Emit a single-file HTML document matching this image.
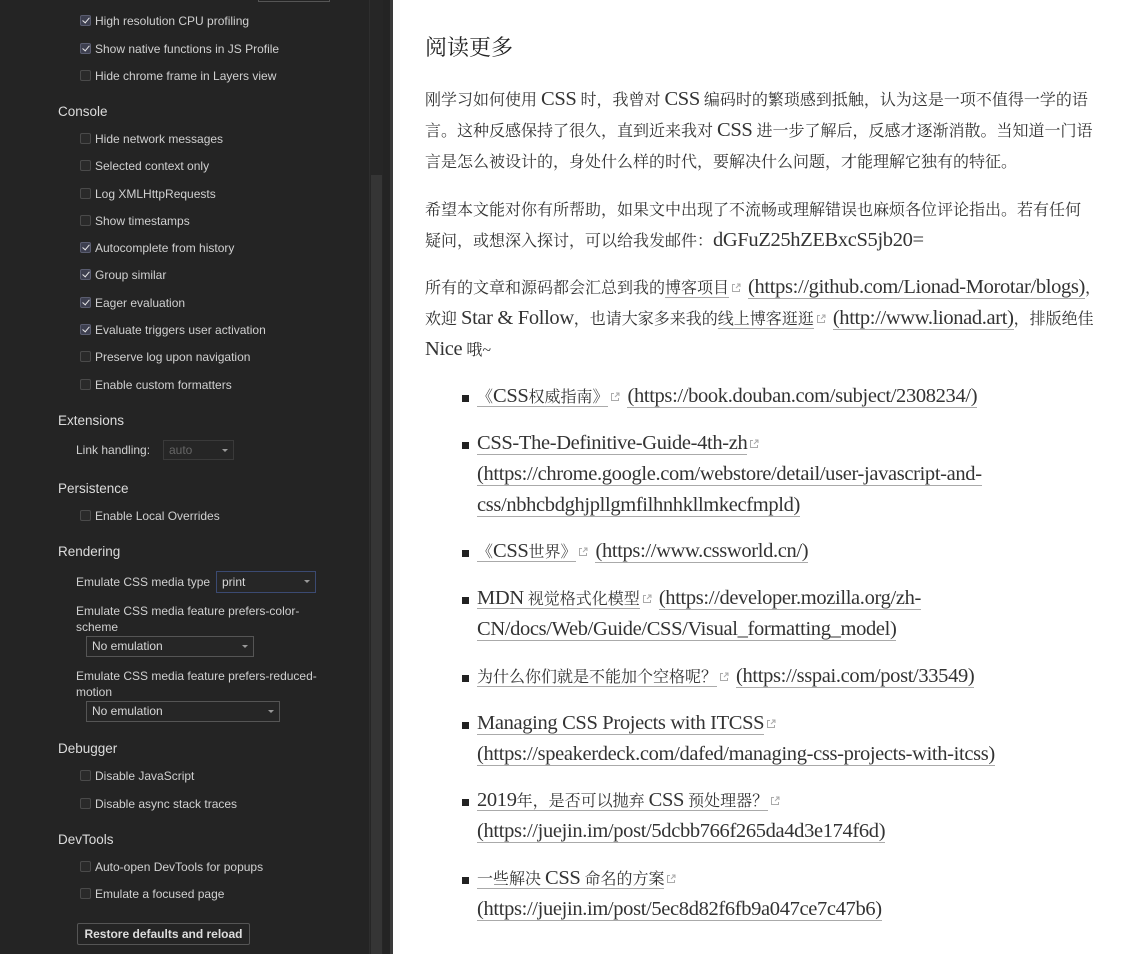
<!DOCTYPE html>
<html><head><meta charset="utf-8"><style>
*{margin:0;padding:0;box-sizing:border-box}
body{width:1132px;height:954px;overflow:hidden;background:#fff;position:relative}
#left{position:absolute;left:0;top:0;width:393px;height:954px;background:#242424;font-family:"Liberation Sans",sans-serif;font-size:12px;color:#d0d0d0}
#left .t{position:absolute;white-space:nowrap;line-height:16px}
#left .h{position:absolute;white-space:nowrap;line-height:16px;font-size:13.5px;left:58px;color:#dcdcdc}
.cb{position:absolute;left:80px;width:11px;height:11px;border:1px solid #4a4a4a;border-radius:2px;background:#2a2a2a}
.cb.on{background:#3d3f4f;border-color:#5a5d70}
.cb.on:after{content:"";position:absolute;left:3px;top:0px;width:3px;height:6px;border:solid #e8e8e8;border-width:0 1.5px 1.5px 0;transform:rotate(40deg)}
.sel{position:absolute;border:1px solid #555;background:#262626;color:#d8d8d8;padding-left:5px;line-height:18px;font-size:12px}
.sel:after{content:"";position:absolute;right:5px;top:8px;border:3px solid transparent;border-top-color:#999}
#sb{position:absolute;left:369px;top:0;width:14px;height:954px;background:#262626;border-left:1px solid #2e2e2e}
#thumb{position:absolute;left:371px;top:175px;width:11px;height:779px;background:#353535}
#edge{position:absolute;left:390px;top:0;width:3px;height:954px;background:#3a3a3a}
#right{position:absolute;left:425px;top:0;font-family:"Liberation Serif","Noto Serif CJK SC",serif;color:#333;font-size:16px}
#right div{position:absolute;white-space:nowrap;line-height:20px}
#right h2{position:absolute;top:33px;left:0;font-size:22px;font-weight:normal;white-space:nowrap;color:#222;line-height:30px}
.l{font-size:20.5px;letter-spacing:-0.35px;line-height:16px}
u{text-decoration:none;border-bottom:1px solid #aaa}
.ic{display:inline-block;width:10px;height:10px;margin:0 3px 0 2px;vertical-align:0px}
.b{position:absolute;left:37px;width:7px;height:7px;background:#222}
</style></head><body>
<div id="left">
<div style="position:absolute;left:258px;top:-4px;width:72px;height:6px;border:1px solid #555;border-top:none"></div>
<div class="cb on" style="top:15px"></div><div class="t" style="left:95px;top:13px">High resolution CPU profiling</div>
<div class="cb on" style="top:43px"></div><div class="t" style="left:95px;top:41px">Show native functions in JS Profile</div>
<div class="cb" style="top:70px"></div><div class="t" style="left:95px;top:68px">Hide chrome frame in Layers view</div>
<div class="h" style="top:104px">Console</div>
<div class="cb" style="top:133px"></div><div class="t" style="left:95px;top:131px">Hide network messages</div>
<div class="cb" style="top:160px"></div><div class="t" style="left:95px;top:158px">Selected context only</div>
<div class="cb" style="top:188px"></div><div class="t" style="left:95px;top:186px">Log XMLHttpRequests</div>
<div class="cb" style="top:215px"></div><div class="t" style="left:95px;top:213px">Show timestamps</div>
<div class="cb on" style="top:242px"></div><div class="t" style="left:95px;top:240px">Autocomplete from history</div>
<div class="cb on" style="top:269px"></div><div class="t" style="left:95px;top:267px">Group similar</div>
<div class="cb on" style="top:297px"></div><div class="t" style="left:95px;top:295px">Eager evaluation</div>
<div class="cb on" style="top:324px"></div><div class="t" style="left:95px;top:322px">Evaluate triggers user activation</div>
<div class="cb" style="top:351px"></div><div class="t" style="left:95px;top:349px">Preserve log upon navigation</div>
<div class="cb" style="top:379px"></div><div class="t" style="left:95px;top:377px">Enable custom formatters</div>
<div class="h" style="top:413px">Extensions</div>
<div class="t" style="left:76px;top:442px">Link handling:</div>
<div class="sel" style="left:163px;top:440px;width:71px;height:20px;color:#666;border-color:#3a3a3a">auto</div>
<div class="h" style="top:481px">Persistence</div>
<div class="cb" style="top:510px"></div><div class="t" style="left:95px;top:508px">Enable Local Overrides</div>
<div class="h" style="top:544px">Rendering</div>
<div class="t" style="left:76px;top:574px">Emulate CSS media type</div>
<div class="sel" style="left:216px;top:571px;width:100px;height:22px;border-color:#3b4a72;line-height:20px">print</div>
<div class="t" style="left:76px;top:603px">Emulate CSS media feature prefers-color-</div>
<div class="t" style="left:76px;top:619px">scheme</div>
<div class="sel" style="left:86px;top:636px;width:168px;height:21px">No emulation</div>
<div class="t" style="left:76px;top:668px">Emulate CSS media feature prefers-reduced-</div>
<div class="t" style="left:76px;top:684px">motion</div>
<div class="sel" style="left:86px;top:701px;width:194px;height:21px">No emulation</div>
<div class="h" style="top:741px">Debugger</div>
<div class="cb" style="top:770px"></div><div class="t" style="left:95px;top:768px">Disable JavaScript</div>
<div class="cb" style="top:798px"></div><div class="t" style="left:95px;top:796px">Disable async stack traces</div>
<div class="h" style="top:832px">DevTools</div>
<div class="cb" style="top:861px"></div><div class="t" style="left:95px;top:859px">Auto-open DevTools for popups</div>
<div class="cb" style="top:888px"></div><div class="t" style="left:95px;top:886px">Emulate a focused page</div>
<div style="position:absolute;left:77px;top:923px;width:173px;height:22px;border:1px solid #555;border-radius:2px;text-align:center;line-height:20px;color:#ddd;font-weight:bold;font-size:12px">Restore defaults and reload</div>
</div>
<div id="sb"></div><div id="thumb"></div><div id="edge"></div>
<svg width="0" height="0" style="position:absolute"><defs><symbol id="e" viewBox="0 0 10 10"><path d="M4 1.5H1.5v7h7V6" fill="none" stroke="#aaa" stroke-width="1"/><path d="M6 1h3v3M9 1L5 5" fill="none" stroke="#aaa" stroke-width="1"/></symbol></defs></svg>
<div id="right">
<h2>阅读更多</h2>
<div style="top:91px">刚学习如何使用 <span class="l">CSS</span> 时，我曾对 <span class="l">CSS</span> 编码时的繁琐感到抵触，认为这是一项不值得一学的语</div>
<div style="top:122px">言。这种反感保持了很久，直到近来我对 <span class="l">CSS</span> 进一步了解后，反感才逐渐消散。当知道一门语</div>
<div style="top:153px">言是怎么被设计的，身处什么样的时代，要解决什么问题，才能理解它独有的特征。</div>
<div style="top:201px">希望本文能对你有所帮助，如果文中出现了不流畅或理解错误也麻烦各位评论指出。若有任何</div>
<div style="top:232px">疑问，或想深入探讨，可以给我发邮件：<span class="l">dGFuZ25hZEBxcS5jb20=</span></div>
<div style="top:279px">所有的文章和源码都会汇总到我的<u>博客项目</u><svg class="ic"><use href="#e"/></svg> <u class="l">(https://github.com/Lionad-Morotar/blogs)</u>，</div>
<div style="top:310px">欢迎 <span class="l">Star &amp; Follow</span>，也请大家多来我的<u>线上博客逛逛</u><svg class="ic"><use href="#e"/></svg> <u class="l">(http://www.lionad.art)</u>，排版绝佳</div>
<div style="top:341px"><span class="l">Nice</span> 哦~</div>
<span class="b" style="top:395px"></span>
<div style="top:388px;left:52px"><u>《<span class="l">CSS</span>权威指南》</u><svg class="ic"><use href="#e"/></svg> <u class="l">(https://book.douban.com/subject/2308234/)</u></div>
<span class="b" style="top:442px"></span>
<div style="top:435px;left:52px"><u class="l">CSS-The-Definitive-Guide-4th-zh</u><svg class="ic"><use href="#e"/></svg></div>
<div style="top:466px;left:52px"><u class="l">(https://chrome.google.com/webstore/detail/user-javascript-and-</u></div>
<div style="top:497px;left:52px"><u class="l">css/nbhcbdghjpllgmfilhnhkllmkecfmpld)</u></div>
<span class="b" style="top:550px"></span>
<div style="top:543px;left:52px"><u>《<span class="l">CSS</span>世界》</u><svg class="ic"><use href="#e"/></svg> <u class="l">(https://www.cssworld.cn/)</u></div>
<span class="b" style="top:597px"></span>
<div style="top:590px;left:52px"><u><span class="l">MDN</span> 视觉格式化模型</u><svg class="ic"><use href="#e"/></svg> <u class="l">(https://developer.mozilla.org/zh-</u></div>
<div style="top:621px;left:52px"><u class="l">CN/docs/Web/Guide/CSS/Visual_formatting_model)</u></div>
<span class="b" style="top:675px"></span>
<div style="top:668px;left:52px"><u>为什么你们就是不能加个空格呢？</u><svg class="ic"><use href="#e"/></svg> <u class="l">(https://sspai.com/post/33549)</u></div>
<span class="b" style="top:722px"></span>
<div style="top:715px;left:52px"><u class="l">Managing CSS Projects with ITCSS</u><svg class="ic"><use href="#e"/></svg></div>
<div style="top:746px;left:52px"><u class="l">(https://speakerdeck.com/dafed/managing-css-projects-with-itcss)</u></div>
<span class="b" style="top:799px"></span>
<div style="top:792px;left:52px"><u><span class="l">2019</span>年，是否可以抛弃 <span class="l">CSS</span> 预处理器？</u><svg class="ic"><use href="#e"/></svg></div>
<div style="top:823px;left:52px"><u class="l">(https://juejin.im/post/5dcbb766f265da4d3e174f6d)</u></div>
<span class="b" style="top:877px"></span>
<div style="top:870px;left:52px"><u>一些解决 <span class="l">CSS</span> 命名的方案</u><svg class="ic"><use href="#e"/></svg></div>
<div style="top:901px;left:52px"><u class="l">(https://juejin.im/post/5ec8d82f6fb9a047ce7c47b6)</u></div>
</div>
</body></html>
